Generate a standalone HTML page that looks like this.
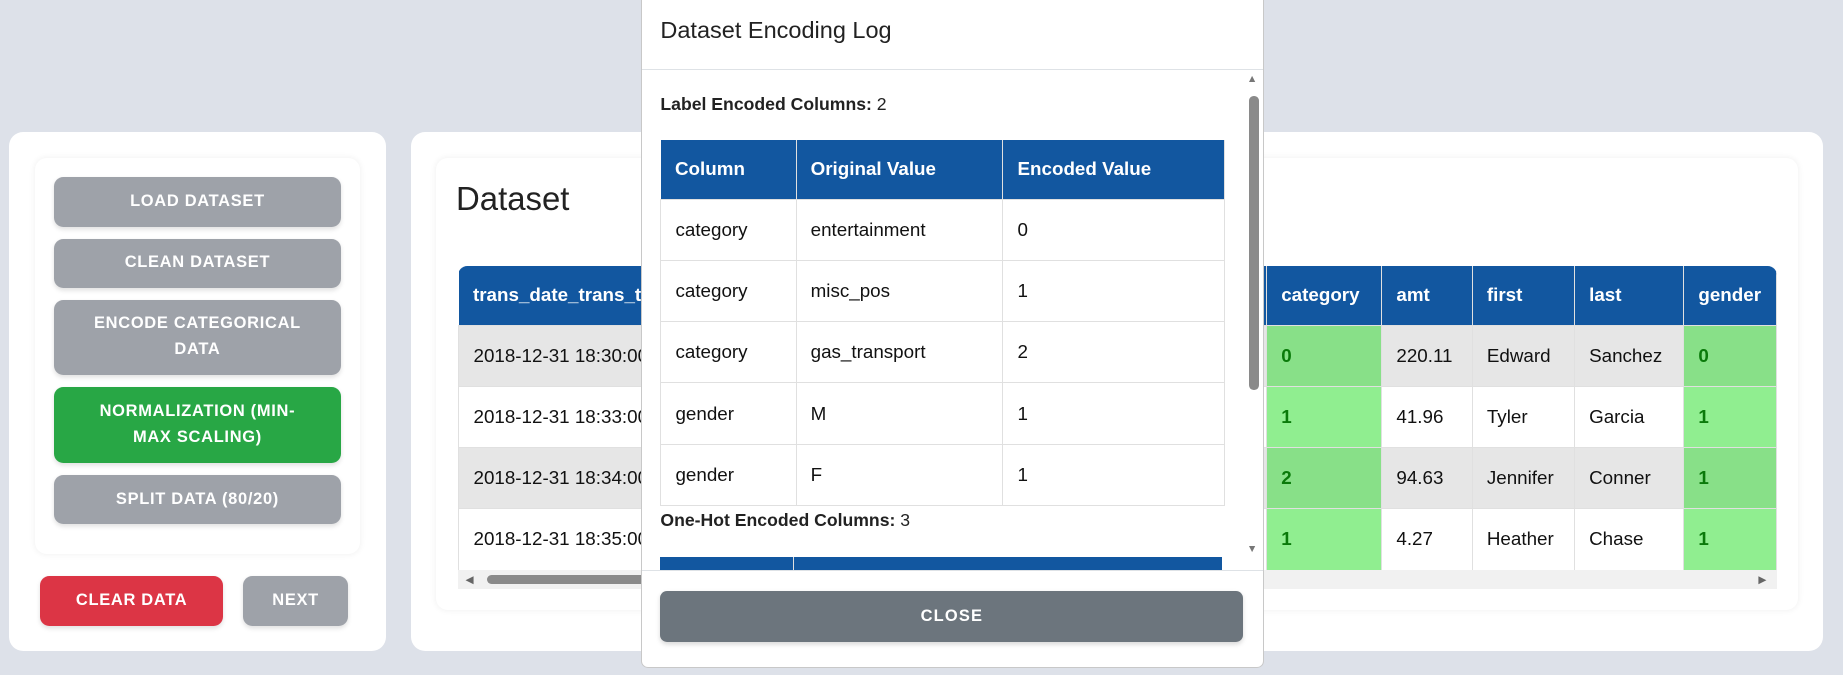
<!DOCTYPE html>
<html><head><meta charset="utf-8">
<style>
*{box-sizing:border-box;margin:0;padding:0}
html,body{width:1843px;height:675px;overflow:hidden;background:#dde1e9;font-family:"Liberation Sans",Arial,sans-serif}
#w{zoom:1.17538;width:1568px;height:574px;position:relative}
.a{position:absolute}
.card{background:#fff;border-radius:12px}
.btn{position:absolute;left:46px;width:244px;background:#9ea2a9;color:#fff;font-weight:bold;font-size:14px;letter-spacing:0.6px;text-align:center;border-radius:8px;display:flex;align-items:center;justify-content:center;line-height:22px;box-shadow:0 2px 4px rgba(0,0,0,.12);padding:0 20px}
table{border-collapse:collapse;font-size:16px;color:#111}
th{background:#1257a0;color:#fff;text-align:left;font-weight:bold;padding:0 12px;height:51px;border-right:1px solid #e0e0e0}
td{padding:0 12px;height:52px;border:1px solid #e0e0e0;white-space:nowrap}
.g{background:#88e088;color:#0a7a0a;font-weight:bold}
.g2{background:#90ee90;color:#0a7a0a;font-weight:bold}
.gr td{background:#e6e6e6}
.gr td.g{background:#88e088}
</style></head><body><div id="w">
<div class="a card" style="left:8px;top:112px;width:320px;height:442px"></div>
<div class="a" style="left:30px;top:134px;width:276px;height:337px;background:#fff;border-radius:10px;box-shadow:0 0 6px rgba(0,0,0,.07)"></div>
<div class="btn" style="top:151px;height:42px">LOAD DATASET</div>
<div class="btn" style="top:203px;height:42px">CLEAN DATASET</div>
<div class="btn" style="top:255px;height:64px">ENCODE CATEGORICAL DATA</div>
<div class="btn" style="top:329px;height:65px;background:#28a745;padding:0 26px">NORMALIZATION (MIN-MAX SCALING)</div>
<div class="btn" style="top:404px;height:42px">SPLIT DATA (80/20)</div>
<div class="btn" style="left:34px;width:156px;top:490px;height:43px;background:#dc3545;padding:0">CLEAR DATA</div>
<div class="btn" style="left:207px;width:89px;top:490px;height:43px;padding:0">NEXT</div>

<div class="a card" style="left:350px;top:112px;width:1201px;height:442px"></div>
<div class="a" style="left:371px;top:134px;width:1159px;height:385px;background:#fff;border-radius:10px;box-shadow:0 0 6px rgba(0,0,0,.07)"></div>
<div class="a" style="left:388px;top:153px;font-size:28px;color:#222">Dataset</div>
<div class="a" style="left:390px;top:226px;width:1122px;height:275px;overflow:hidden;border-radius:8px 8px 0 0">
<table style="position:absolute;left:0;top:0;width:1122px">
<tr><th style="width:688px">trans_date_trans_time</th><th style="width:98px">category</th><th style="width:77px">amt</th><th style="width:87px">first</th><th style="width:93px">last</th><th style="width:79px">gender</th></tr>
<tr class="gr"><td>2018-12-31 18:30:00</td><td class="g">0</td><td>220.11</td><td>Edward</td><td>Sanchez</td><td class="g">0</td></tr>
<tr><td>2018-12-31 18:33:00</td><td class="g2">1</td><td>41.96</td><td>Tyler</td><td>Garcia</td><td class="g2">1</td></tr>
<tr class="gr"><td>2018-12-31 18:34:00</td><td class="g">2</td><td>94.63</td><td>Jennifer</td><td>Conner</td><td class="g">1</td></tr>
<tr><td>2018-12-31 18:35:00</td><td class="g2">1</td><td>4.27</td><td>Heather</td><td>Chase</td><td class="g2">1</td></tr>
</table>
<div class="a" style="left:0;top:259px;width:1122px;height:16px;background:#f1f1f1"></div>
<div class="a" style="left:24px;top:263px;width:140px;height:8px;background:#8a8a8a;border-radius:4px"></div>
<div class="a" style="left:6px;top:262px;font-size:9px;color:#666">◀</div>
<div class="a" style="left:1106px;top:262px;font-size:9px;color:#666">▶</div>
</div>

<div class="a" style="left:545px;top:-6px;width:530px;height:574px;background:#fff;border:1px solid #c8c8c8;border-radius:6px;overflow:hidden">
<div class="a" style="left:16px;top:20px;font-size:20px;color:#222">Dataset Encoding Log</div>
<div class="a" style="left:0;top:64px;width:530px;height:1px;background:#dee2e6"></div>
<div class="a" style="left:0;top:65px;width:530px;height:425px;overflow:hidden">
<div class="a" style="left:16px;top:20px;font-size:15px;color:#222"><b>Label Encoded Columns:</b> 2</div>
<table class="a" style="left:16px;top:59px;width:480px">
<tr><th style="width:115px">Column</th><th style="width:176px">Original Value</th><th>Encoded Value</th></tr>
<tr><td>category</td><td>entertainment</td><td>0</td></tr>
<tr><td>category</td><td>misc_pos</td><td>1</td></tr>
<tr><td>category</td><td>gas_transport</td><td>2</td></tr>
<tr><td>gender</td><td>M</td><td>1</td></tr>
<tr><td>gender</td><td>F</td><td>1</td></tr>
</table>
<div class="a" style="left:16px;top:374px;font-size:15px;color:#222"><b>One-Hot Encoded Columns:</b> 3</div>
<div class="a" style="left:16px;top:414px;width:478px;height:20px;background:#1257a0"></div>
<div class="a" style="left:129px;top:414px;width:1px;height:20px;background:#e0e0e0"></div>
<div class="a" style="left:515px;top:2px;font-size:9px;color:#777">▲</div>
<div class="a" style="left:515px;top:402px;font-size:9px;color:#777">▼</div>
<div class="a" style="left:517px;top:22px;width:8px;height:250px;background:#8a8a8a;border-radius:4px"></div>
</div>
<div class="a" style="left:0;top:490px;width:530px;height:1px;background:#dee2e6"></div>
<div class="a" style="left:16px;top:508px;width:496px;height:43px;background:#6c757d;border-radius:6px;color:#fff;font-weight:bold;font-size:14px;letter-spacing:1px;display:flex;align-items:center;justify-content:center;box-shadow:0 2px 4px rgba(0,0,0,.15)">CLOSE</div>
</div>
</div></body></html>
